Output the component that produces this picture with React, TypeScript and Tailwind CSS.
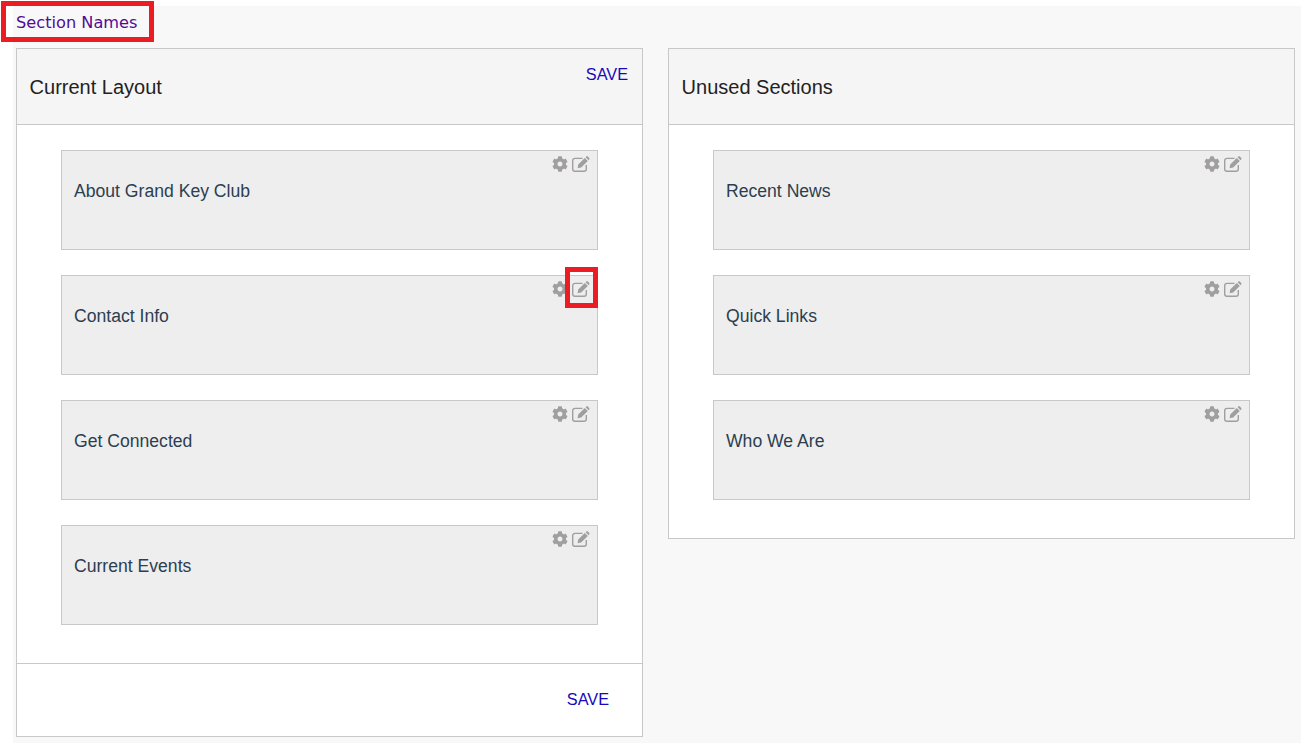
import React from 'react';
import { FaCog } from 'react-icons/fa';

// fa-pencil-square-o look, react-icons' version has a thinner pencil
const EditIcon = () => (
  <svg width="18" height="16" viewBox="0 0 18 16" className="shrink-0">
    <path d="M10.5 2.4H3A2.3 2.3 0 0 0 .7 4.7V13A2.3 2.3 0 0 0 3 15.3h9a2.3 2.3 0 0 0 2.3-2.3V9" fill="none" stroke="currentColor" strokeWidth="1.4" />
    <path d="M5.6 12.2 6.2 8.6 12.8 2 15.8 5 9.2 11.6ZM13.6 1.2 14.3.6C14.8.1 15.4.1 15.9.6L17.2 1.9C17.7 2.4 17.7 3 17.2 3.5L16.6 4.2Z" fill="currentColor" />
  </svg>
);

const SectionCard = ({ title, marked }: { title: string; marked?: boolean }) => (
  <div className="relative h-[100px] border border-[#c8c8c8] bg-[#eeeeee] px-3 pt-[28px]">
    <div className="absolute right-[7px] top-[5px] flex items-center gap-[4px] text-[#a09e9e]">
      <FaCog className="h-4 w-4" />
      <EditIcon />
    </div>
    {marked && <div className="absolute right-[-1px] top-[-9px] h-[41px] w-[33px] border-[5px] border-[#ec1c24]" />}
    <p className="text-[17.6px] leading-6 text-[#2c3e50]">{title}</p>
  </div>
);

const Panel = ({ title, save, sections, footer, marked }: { title: string; save?: boolean; sections: string[]; footer?: boolean; marked?: string }) => (
  <section className="w-[627px] border border-[#c8c8c8] bg-white">
    <header className="relative h-[76px] border-b border-[#c8c8c8] bg-[#f5f5f5] px-[12.6px] pt-[26px]">
      <h2 className="text-[20px] leading-6 text-[#222222]">{title}</h2>
      {save && <a className="absolute right-[14px] top-[15px] text-[16.3px] leading-5 text-[#1709bb]">SAVE</a>}
    </header>
    <div className="flex flex-col gap-[25px] px-[44px] pb-[38px] pt-[25px]">
      {sections.map((s) => (
        <SectionCard key={s} title={s} marked={s === marked} />
      ))}
    </div>
    {footer && (
      <footer className="flex h-[73px] justify-end border-t border-[#c8c8c8] pr-[33px] pt-[25px]">
        <a className="text-[16.3px] leading-5 text-[#1709bb]">SAVE</a>
      </footer>
    )}
  </section>
);

export default function App() {
  return (
    <div className="relative h-[743px] w-[1301px] overflow-hidden bg-white font-['Liberation_Sans',Arial,sans-serif]">
      <div className="absolute left-[1px] top-[1px] z-10 h-[41px] w-[153px] border-[5px] border-[#ec1c24]" />
      <div className="ml-[13px] mt-[6px] h-[737px] bg-[#f8f8f8]">
        <a className="ml-[3px] block pt-[7px] font-['DejaVu_Sans',sans-serif] text-[16.2px] leading-5 text-[#520b96]">Section Names</a>
        <div className="ml-[3px] mt-[15px] flex items-start gap-[25px]">
          <Panel
            title="Current Layout"
            save
            footer
            marked="Contact Info"
            sections={['About Grand Key Club', 'Contact Info', 'Get Connected', 'Current Events']}
          />
          <Panel title="Unused Sections" sections={['Recent News', 'Quick Links', 'Who We Are']} />
        </div>
      </div>
    </div>
  );
}
